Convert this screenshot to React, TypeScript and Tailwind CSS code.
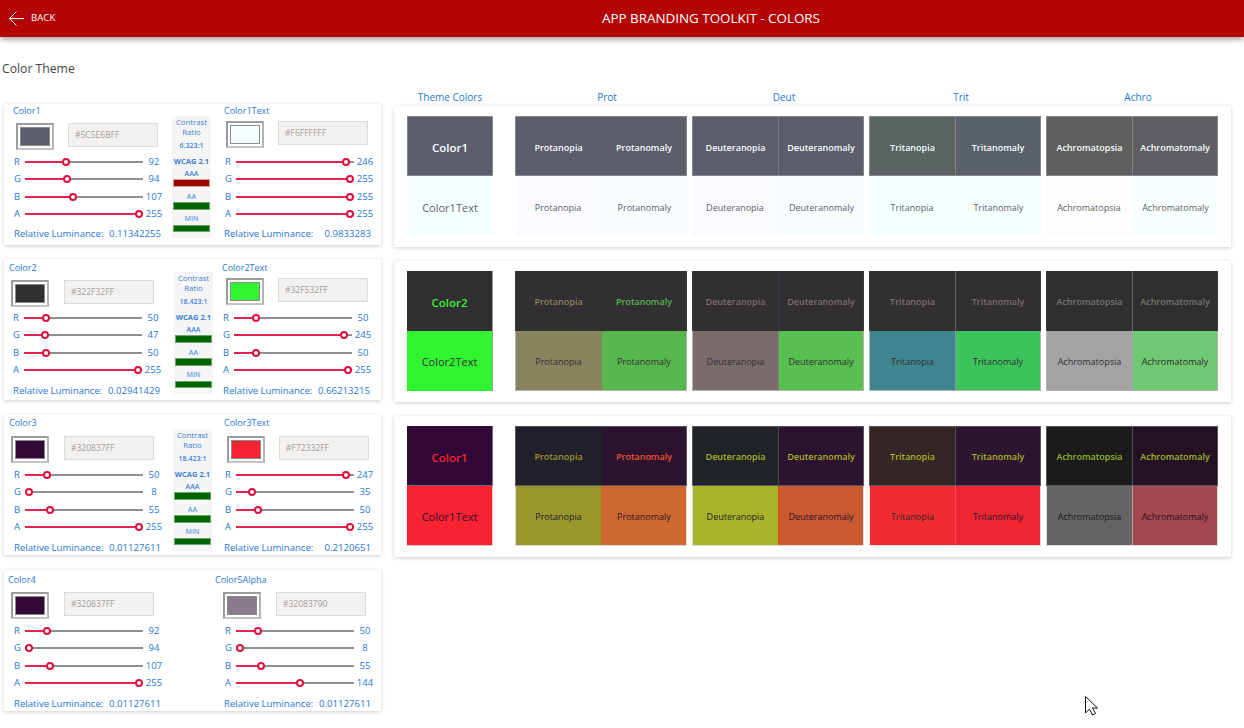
import React from "react";

type EditorProps = {
  label: string; hex: string; color: string; vals: number[]; pos?: number[]; lum: string;
  labelCls: string; swatchRow: string; swatchMl: string; inputMl: string; rows: string; lumCls: string;
};

function Editor(p: EditorProps) {
  const letters = ["R", "G", "B", "A"];
  return (
    <div className="w-[168px]">
      <div className={`h-3 text-[9px] leading-3 text-[#2677d2] ${p.labelCls}`}>{p.label}</div>
      <div className={`flex items-start ${p.swatchRow} ${p.swatchMl}`}>
        <div className="w-[38px] h-[27px] border-2 border-[#9c9c9c] border-r-[#b4b4b4] border-b-[#c4c4c4] bg-white p-[2px]">
          <div className="w-full h-full border border-[#8a8a8a]" style={{ backgroundColor: p.color }} />
        </div>
        <div className={`w-[90px] h-[24px] bg-[#f2f1ef] border-[1.5px] border-[#dcdcda] pl-[6px] flex items-center text-[8.5px] text-[#a39d9d] ${p.inputMl}`}>{p.hex}</div>
      </div>
      <div className={p.rows}>
        {letters.map((l, i) => {
          const t = p.pos ? p.pos[i] : p.vals[i];
          const center = (t / 255) * 114;
          return (
            <div key={l} className="flex items-center h-[17.5px] text-[9.5px] text-[#2677d2]">
              <span className="w-[11px]">{l}</span>
              <div className="relative w-[118px] h-[2px] bg-[#8f8f8f]">
                <div className="absolute left-0 top-0 h-[2px] bg-[#e6234c]" style={{ width: center }} />
                <div className="absolute top-[-3px] w-[8px] h-[8px] rounded-full border-2 border-[#e0103e] bg-white" style={{ left: center - 4 }} />
              </div>
              <span className="w-[22px] text-center">{p.vals[i]}</span>
            </div>
          );
        })}
      </div>
      <div className={`flex justify-between w-[147px] h-3 text-[9.6px] leading-3 whitespace-nowrap text-[#2677d2] ${p.lumCls}`}>
        <span>Relative Luminance:</span><span>{p.lum}</span>
      </div>
    </div>
  );
}

function Contrast({ ratio, aaa, cls }: { ratio: string; aaa: string; cls: string }) {
  return (
    <div className={`w-[39px] h-[122px] bg-[#f5f5f5] flex flex-col items-center text-[#3d7fd6] ${cls}`}>
      <div className="mt-[1px] text-[7.8px] leading-[10px] text-center">Contrast<br />Ratio</div>
      <div className="mt-[5px] text-[7px] leading-[8px] font-semibold whitespace-nowrap">{ratio}</div>
      <div className="mt-[7px] text-[7.5px] leading-[9px] font-bold whitespace-nowrap">WCAG 2.1</div>
      <div className="mt-[3px] text-[7px] leading-[9px] font-semibold">AAA</div>
      <div className={`w-[37px] h-[8px] mt-[1px] border ${aaa}`} />
      <div className="mt-[5px] text-[7px] leading-[9px] font-semibold text-[#5b9ae0]">AA</div>
      <div className="w-[37px] h-[8px] mt-[1px] bg-[#006400] border border-[#6aa86a]" />
      <div className="mt-[4px] text-[7px] leading-[9px] font-semibold text-[#6a9fe0]">MIN</div>
      <div className="w-[37px] h-[7px] mt-[2px] bg-[#006400] border border-[#6aa86a]" />
    </div>
  );
}

const GREEN = "bg-[#006400] border-[#6aa86a]";

function LeftCards() {
  return (
    <div className="ml-[4px] mt-[13px] w-[377px] flex flex-col">
      <div className="h-[141px] flex bg-white shadow-[0_1px_4px_rgba(0,0,0,0.2)]">
        <Editor label="Color1" hex="#5C5E6BFF" color="#5c5e6b" vals={[92, 94, 107, 255]} lum="0.11342255" labelCls="ml-[9px] pt-[1px]" swatchRow="mt-[7px]" swatchMl="ml-[12px]" inputMl="ml-[14px]" rows="ml-[10px] mt-[3px]" lumCls="ml-[10px] mt-[5px]" />
        <div className="w-[41px] pt-[12px]"><Contrast ratio="6.323:1" aaa="bg-[#990000] border-[#d5a0a0]" cls="" /></div>
        <Editor label="Color1Text" hex="#F6FFFFFF" color="#f6ffff" vals={[246, 255, 255, 255]} lum="0.9833283" labelCls="ml-[11px] pt-[1px]" swatchRow="mt-[5px]" swatchMl="ml-[13px]" inputMl="ml-[14px]" rows="ml-[12px] mt-[5px]" lumCls="ml-[11px] mt-[5px]" />
      </div>
      <div className="h-[141px] mt-[14px] flex bg-white shadow-[0_1px_4px_rgba(0,0,0,0.2)]">
        <Editor label="Color2" hex="#322F32FF" color="#322f32" vals={[50, 47, 50, 255]} lum="0.02941429" labelCls="ml-[5px] pt-[3px]" swatchRow="mt-[9px]" swatchMl="ml-[7px]" inputMl="ml-[15px]" rows="ml-[9px] mt-[2px]" lumCls="ml-[9px] mt-[6px]" />
        <div className="w-[41px] pt-[13px]"><Contrast ratio="18.423:1" aaa={GREEN} cls="ml-[2px]" /></div>
        <Editor label="Color2Text" hex="#32F532FF" color="#32f532" vals={[50, 245, 50, 255]} lum="0.66213215" labelCls="ml-[9px] pt-[3px]" swatchRow="mt-[7px]" swatchMl="ml-[13px]" inputMl="ml-[14px]" rows="ml-[10px] mt-[4px]" lumCls="ml-[10px] mt-[6px]" />
      </div>
      <div className="h-[140px] mt-[15px] flex bg-white shadow-[0_1px_4px_rgba(0,0,0,0.2)]">
        <Editor label="Color3" hex="#320837FF" color="#320837" vals={[50, 8, 55, 255]} lum="0.01127611" labelCls="ml-[5px] pt-[2px]" swatchRow="mt-[9px]" swatchMl="ml-[7px]" inputMl="ml-[15px]" rows="ml-[10px] mt-[3px]" lumCls="ml-[10px] mt-[6px]" />
        <div className="w-[41px] pt-[14px]"><Contrast ratio="18.423:1" aaa={GREEN} cls="ml-[1px]" /></div>
        <Editor label="Color3Text" hex="#F72332FF" color="#f72332" vals={[247, 35, 50, 255]} lum="0.2120651" labelCls="ml-[11px] pt-[2px]" swatchRow="mt-[9px]" swatchMl="ml-[14px]" inputMl="ml-[14px]" rows="ml-[12px] mt-[3px]" lumCls="ml-[11px] mt-[6px]" />
      </div>
      <div className="h-[141px] mt-[15px] flex bg-white shadow-[0_1px_4px_rgba(0,0,0,0.2)]">
        <Editor label="Color4" hex="#320837FF" color="#320837" vals={[92, 94, 107, 255]} pos={[50, 8, 55, 255]} lum="0.01127611" labelCls="ml-[4px] pt-[4px]" swatchRow="mt-[10px]" swatchMl="ml-[7px]" inputMl="ml-[15px]" rows="ml-[10px] mt-[3px]" lumCls="ml-[10px] mt-[6px]" />
        <div className="w-[41px]" />
        <Editor label="Color5Alpha" hex="#32083790" color="#8a7b8c" vals={[50, 8, 55, 144]} lum="0.01127611" labelCls="ml-[2px] pt-[4px]" swatchRow="mt-[10px]" swatchMl="ml-[10px]" inputMl="ml-[15px]" rows="ml-[12px] mt-[3px]" lumCls="ml-[11px] mt-[6px]" />
      </div>
    </div>
  );
}

type Cell = { name: string; bg: string; fg: string };
type Group = { top: Cell[]; bottom: Cell[]; topDiv: string; botDiv: string };
type RowData = {
  theme: [string, string, string, string];
  themeTopFg: string; themeBotFg: string;
  topBorder: string; botBorder: string; themeTop: string; themeBot: string;
  topPad: string; botPad: string; themeTopPad: string; themeBotPad: string;
  groups: Group[];
};

const names = [["Protanopia", "Protanomaly"], ["Deuteranopia", "Deuteranomaly"], ["Tritanopia", "Tritanomaly"], ["Achromatopsia", "Achromatomaly"]];

function mk(top: [string, string][], bottom: [string, string][], topDivs: string[], botDivs: string[]): Group[] {
  return names.map((n, g) => ({
    top: n.map((name, i) => ({ name, bg: top[g * 2 + i][0], fg: top[g * 2 + i][1] })),
    bottom: n.map((name, i) => ({ name, bg: bottom[g * 2 + i][0], fg: bottom[g * 2 + i][1] })),
    topDiv: topDivs[g],
    botDiv: botDivs[g],
  }));
}

const rows: RowData[] = [
  {
    theme: ["Color1", "#5c5e6b", "Color1Text", "#f6ffff"], themeTopFg: "#f6ffff", themeBotFg: "#5c5e6b",
    topBorder: "border border-[#85858c]", botBorder: "", themeTop: "border border-[#85858c]", themeBot: "",
    topPad: "pt-[4px]", botPad: "pt-[4px]", themeTopPad: "pt-[3px]", themeBotPad: "pt-[4px]",
    groups: mk(
      [["#5c5e6b", "#fafaff"], ["#5c5e6b", "#f8fcff"], ["#5c5e6b", "#fafaff"], ["#5c5e6b", "#f8fdff"], ["#5b6363", "#f6ffff"], ["#5a6168", "#f6ffff"], ["#5f5f5f", "#fdfdfd"], ["#5f5e63", "#f7ffff"]],
      [["#fafaff", "#5c5e6b"], ["#f8fcff", "#5c5e6b"], ["#fafaff", "#5c5e6b"], ["#f8fdff", "#5c5e6b"], ["#f6ffff", "#5b6363"], ["#f6ffff", "#5a6168"], ["#fdfdfd", "#5f5f5f"], ["#f7ffff", "#5f5e63"]],
      ["border-[#62636e]", "border-[#757880]", "border-[#85858c]", "border-[#85858c]"],
      ["border-transparent", "border-transparent", "border-transparent", "border-transparent"]
    ),
  },
  {
    theme: ["Color2", "#322f32", "Color2Text", "#32f532"], themeTopFg: "#32f532", themeBotFg: "#322f32",
    topBorder: "border-x border-[#3c3a3c]", botBorder: "border-x border-b border-[#b4b4ac]", themeTop: "border-r border-[#9a979a]", themeBot: "border-r border-[#9a9f9a]",
    topPad: "pt-[1px]", botPad: "pt-[3px]", themeTopPad: "pt-[4px]", themeBotPad: "pt-[3px]",
    groups: mk(
      [["#322f32", "#87845f"], ["#322f32", "#58b64e"], ["#322f32", "#7b6c6c"], ["#322f32", "#7b6c6c"], ["#312f30", "#7a6f6f"], ["#312f30", "#7a6f6f"], ["#2f2f2f", "#757575"], ["#2f2f2f", "#757575"]],
      [["#87845f", "#322f32"], ["#58b64e", "#322f32"], ["#7b6c6c", "#322f32"], ["#57c051", "#322f32"], ["#3e8590", "#322f32"], ["#3cc35b", "#322f32"], ["#a3a3a3", "#322f32"], ["#6fc972", "#322f32"]],
      ["border-[#322f32]", "border-[#3e3c42]", "border-[#686668]", "border-[#686668]"],
      ["border-[#87845f]", "border-[#8a7c7c]", "border-[#7d9a9e]", "border-[#a3a3a3]"]
    ),
  },
  {
    theme: ["Color1", "#320837", "Color1Text", "#f72332"], themeTopFg: "#f72332", themeBotFg: "#320837",
    topBorder: "border border-[#5a5560]", botBorder: "border-x border-b border-[#dedcd8]", themeTop: "border-r border-b border-[#7a6a80]", themeBot: "border-r border-b border-[#e8c0c8]",
    topPad: "pt-[1px]", botPad: "pt-[3px]", themeTopPad: "pt-[4px]", themeBotPad: "pt-[3px]",
    groups: mk(
      [["#22202b", "#9a972d"], ["#2d132f", "#e8552f"], ["#212427", "#a9b42a"], ["#2c132f", "#a9b42a"], ["#332624", "#a9b42a"], ["#2d1430", "#a9b42a"], ["#1b1b1b", "#8fb82a"], ["#241124", "#a0b82a"]],
      [["#9a972d", "#22202b"], ["#cd692f", "#2d132f"], ["#a9b42a", "#212427"], ["#cb592f", "#2c132f"], ["#ef2c2f", "#332624"], ["#ef2532", "#2d1430"], ["#646464", "#1b1b1b"], ["#a5474f", "#241124"]],
      ["border-[#22202b]", "border-[#4a4a50]", "border-[#4a5058]", "border-[#4a5058]"],
      ["border-transparent", "border-transparent", "border-[#e0506a]", "border-[#a8a8a8]"]
    ),
  },
];

function SimCell({ c, div, cls }: { c: Cell; div?: string; cls: string }) {
  return (
    <div
      className={`w-1/2 h-full flex items-center justify-center text-[9px] ${cls} ${div ? "border-l " + div : ""}`}
      style={{ backgroundColor: c.bg, color: c.fg }}
    >
      {c.name}
    </div>
  );
}

function ThemeCard({ r, cls }: { r: RowData; cls: string }) {
  return (
    <div className={`h-[141px] pt-[10px] pl-[13px] flex bg-white shadow-[0_1px_4px_rgba(0,0,0,0.2)] ${cls}`}>
      <div className="w-[86px] h-[120px] flex flex-col">
        <div className={`h-[60px] flex items-center justify-center text-[11.5px] font-semibold ${r.themeTopPad} ${r.themeTop}`} style={{ backgroundColor: r.theme[1], color: r.themeTopFg }}>{r.theme[0]}</div>
        <div className={`h-[60px] flex items-center justify-center text-[11px] ${r.themeBotPad} ${r.themeBot}`} style={{ backgroundColor: r.theme[3], color: r.themeBotFg }}>{r.theme[2]}</div>
      </div>
      <div className="ml-[22px] flex gap-[5px]">
        {r.groups.map((g) => (
          <div key={g.top[0].name} className="w-[172px] h-[120px] flex flex-col">
            <div className={`h-[60px] flex ${r.topBorder}`}>
              <SimCell c={g.top[0]} cls={`font-semibold ${r.topPad}`} />
              <SimCell c={g.top[1]} div={g.topDiv} cls={`font-semibold ${r.topPad}`} />
            </div>
            <div className={`h-[60px] flex ${r.botBorder}`}>
              <SimCell c={g.bottom[0]} cls={`font-normal ${r.botPad}`} />
              <SimCell c={g.bottom[1]} div={g.botDiv} cls={`font-normal ${r.botPad}`} />
            </div>
          </div>
        ))}
      </div>
    </div>
  );
}

function RightPanel() {
  return (
    <div className="ml-[13px] w-[837px] flex flex-col">
      <div className="h-[15px] pb-[2px] flex items-center text-[10px] text-[#2677d2]">
        <div className="ml-[13px] w-[86px] text-center whitespace-nowrap">Theme Colors</div>
        <div className="ml-[25.5px] w-[177px] text-center">Prot</div>
        <div className="w-[177px] text-center">Deut</div>
        <div className="w-[177px] text-center">Trit</div>
        <div className="w-[177px] text-center">Achro</div>
      </div>
      <ThemeCard r={rows[0]} cls="" />
      <ThemeCard r={rows[1]} cls="mt-[14px]" />
      <ThemeCard r={rows[2]} cls="mt-[14px]" />
    </div>
  );
}

export default function App() {
  return (
    <div className="relative w-[1244px] h-[728px] overflow-hidden bg-white font-['Open_Sans','Noto_Sans',sans-serif]">
      <header className="relative h-[37px] flex items-center bg-[#b30505] text-white shadow-[0_2px_6px_rgba(0,0,0,0.4)]">
        <div className="w-[178px] flex items-center pl-[9px]">
          <svg width="15" height="15" viewBox="0 0 15 15" fill="none" stroke="#ffffff" strokeWidth="1">
            <path d="M0.5 7.5H15M7.5 0.5L0.5 7.5L7.5 14.5" />
          </svg>
          <span className="ml-[7px] text-[9.5px] tracking-[0.1px]">BACK</span>
        </div>
        <div className="flex-1 text-center text-[13.4px]">APP BRANDING TOOLKIT - COLORS</div>
      </header>
      <div className="h-[54px] pt-[25px] text-[12.2px] leading-[14px] pl-[2px] text-[#444444]">Color Theme</div>
      <div className="flex items-start">
        <LeftCards />
        <RightPanel />
      </div>
      <svg className="absolute left-[1085px] top-[696px]" width="14" height="20" viewBox="0 0 14 20" fill="#ffffff" stroke="#111111" strokeWidth="1">
        <path d="M0.5 0.5V17L4.5 13L7.5 19L10.5 17.5L7.5 12L12.5 12Z" />
      </svg>
    </div>
  );
}
